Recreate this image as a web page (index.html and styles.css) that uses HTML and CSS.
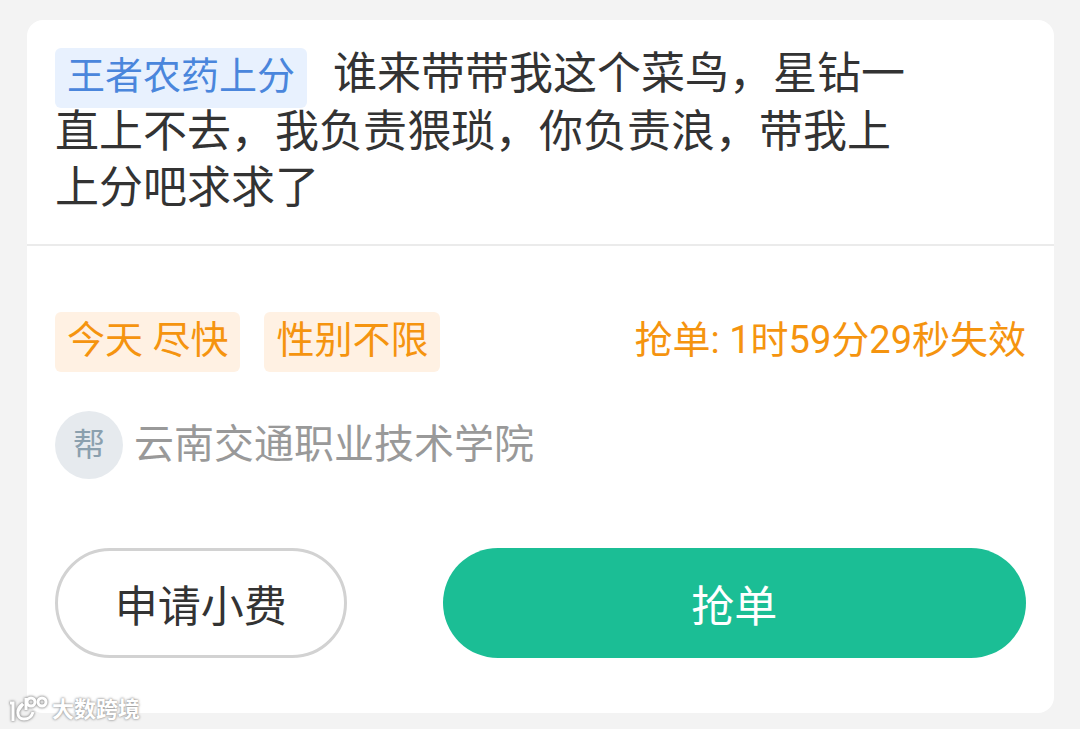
FILE: index.html
```html
<!DOCTYPE html>
<html lang="zh-CN">
<head>
  <meta charset="UTF-8">
  <meta name="viewport" content="width=device-width, initial-scale=1">
  <title>抢单</title>
  <link rel="stylesheet" href="styles.css">
</head>
<body>

  <main class="card">
    <p class="descripcion"><span class="etiqueta azul">王者农药上分</span>谁来带带我这个菜鸟，星钻一直上不去，我负责猥琐，你负责浪，带我上上分吧求求了</p>

    <div class="detalle">
      <div class="fila">
        <span class="etiqueta naranja">今天 尽快</span>
        <span class="etiqueta naranja">性别不限</span>
        <span class="tiempo">抢单: 1时59分29秒失效</span>
      </div>

      <div class="escuela">
        <span class="avatar">帮</span>
        <span>云南交通职业技术学院</span>
      </div>

      <div class="botones">
        <button type="button" class="btn-borde">申请小费</button>
        <button type="button" class="btn-verde">抢单</button>
      </div>
    </div>
  </main>

  <!-- Marca de agua -->
  <div class="marca">
    <svg width="42" height="30" viewBox="0 0 42 30" aria-hidden="true">
      <path d="M2 8 H5 V26"/>
      <path d="M15 9 C8 13 8 24 16 24 C21 24 24 21 25 17"/>
      <path d="M10 16 L15 9"/>
      <path d="M18 15 V3"/>
      <circle cx="23" cy="7" r="4"/>
      <circle cx="34" cy="7" r="4"/>
    </svg>
    <span>大数跨境</span>
  </div>

</body>
</html>
```

FILE: styles.css
```css
* {
  box-sizing: border-box;
}

body {
  margin: 0;
  padding: 20px 26px 16px 27px;
  background: #f3f3f3;
  color: #333;
  font-family: Roboto, "Noto Sans CJK SC", sans-serif;
}

.card {
  background: white;
  border-radius: 16px;
}

.descripcion {
  margin: 0;
  padding: 26px 144px 28px 28px;
  border-bottom: 2px solid #ebebeb;
  font-size: 44px;
  line-height: 56px;
}

.etiqueta {
  display: inline-block;
  padding: 0 12px 4px;
  border-radius: 6px;
  font-size: 38px;
  line-height: 56px;
}

.azul {
  margin-right: 26px;
  margin-bottom: -4px;
  background: #e8f1fe;
  color: #4a86dc;
}

.naranja {
  background: #fff1e3;
  color: #f5940f;
}

.detalle {
  padding: 66px 28px 55px;
}

.fila {
  display: flex;
  align-items: flex-start;
  gap: 24px;
}

.tiempo {
  margin-left: auto;
  color: #f5940f;
  font-size: 38px;
  line-height: 56px;
}

.escuela {
  display: flex;
  align-items: center;
  gap: 11px;
  margin-top: 39px;
  color: #999;
  font-size: 40px;
  line-height: 68px;
}

.avatar {
  width: 68px;
  height: 68px;
  border-radius: 50%;
  background: #e6eaee;
  color: #8ba0ae;
  font-size: 32px;
  text-align: center;
}

.botones {
  display: grid;
  grid-template-columns: 1fr 2fr;
  gap: 96px;
  margin-top: 69px;
}

.botones button {
  height: 110px;
  border: none;
  border-radius: 55px;
  font-family: inherit;
  font-size: 43px;
  cursor: pointer;
}

.botones .btn-borde {
  border: 3px solid #d2d2d2;
  background: white;
  color: #333;
}

.botones .btn-verde {
  background: #1bbe95;
  color: white;
}

.marca {
  position: absolute;
  left: 8px;
  bottom: 4px;
  display: flex;
  align-items: center;
  gap: 2px;
  color: white;
  font-size: 22px;
  font-weight: bold;
  line-height: 30px;
  text-shadow: 0 0 2px #999, 0 0 3px #999;
}

.marca svg {
  fill: none;
  stroke: white;
  stroke-width: 3;
  filter: drop-shadow(0 0 1px #999) drop-shadow(0 0 1px #aaa);
}
```
